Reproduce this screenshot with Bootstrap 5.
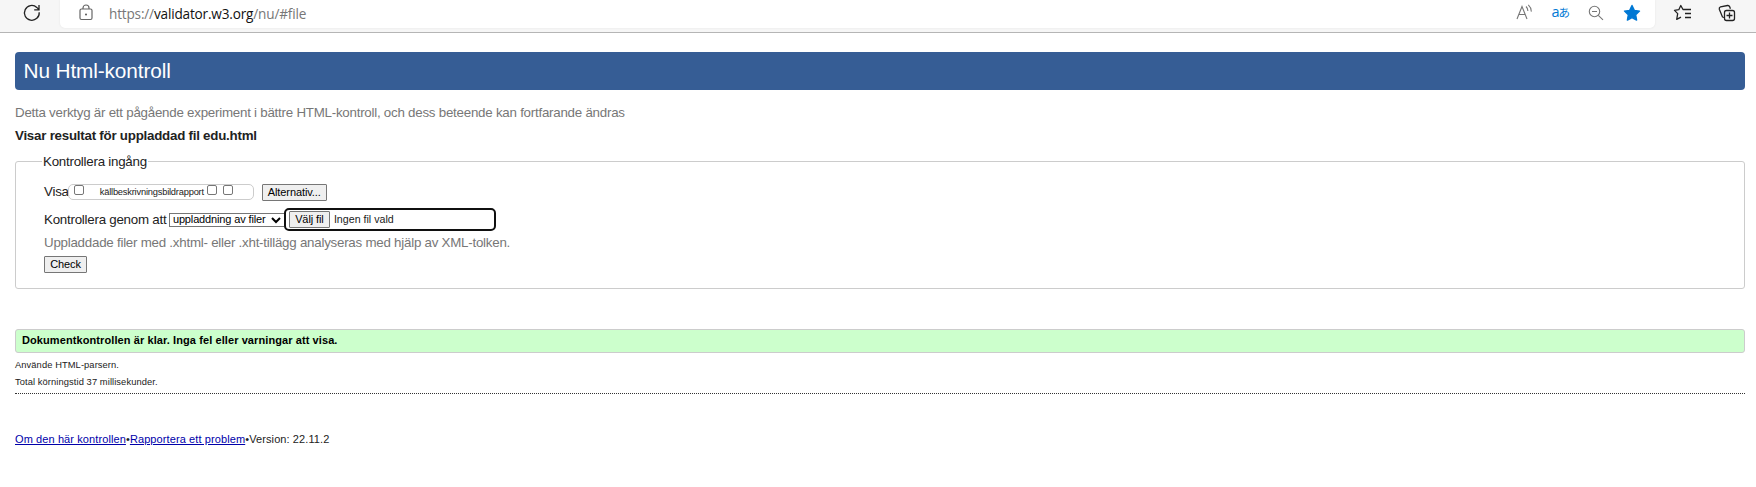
<!DOCTYPE html>
<html lang="sv">
<head>
<meta charset="utf-8">
<title>Nu Html-kontroll</title>
<link href="https://cdn.jsdelivr.net/npm/bootstrap@5.3.0/dist/css/bootstrap.min.css" rel="stylesheet">
<style>
body{font-family:"Liberation Sans",Arial,sans-serif;font-size:13.33px;line-height:20px;letter-spacing:-.24px;color:#222;background:#fff;overflow:hidden}
.browser{height:33px;background:#f6f6f6;border-bottom:1px solid #b5b5b5}
.browser svg{display:block;flex:none;letter-spacing:0}
.reload{width:60px;padding-left:22px;padding-top:3px}
.address{height:28px;width:1595px;background:#fff;border-radius:0 0 5px 5px;padding:0 7px 0 17px;box-shadow:0 0 2px #e2e2e2}
.url{font-family:"Open Sans","Noto Sans",sans-serif;font-size:13.6px;letter-spacing:-.18px;color:#777;margin-left:14px;line-height:27px;white-space:nowrap}
.url b{font-weight:400;color:#111}
.page-body{padding:19px 11px 0 15px}
.banner{height:38px;line-height:38px;background:#365d95;color:#fff;font-size:20.8px;letter-spacing:-.12px;font-weight:400;border-radius:4px;padding-left:8.5px;margin:0 0 13px}
.grey{color:#777}
.line{height:20px;margin:0;white-space:nowrap}
.checker{height:139px;margin:4px 0 0;border:1px solid #ccc;border-radius:3px;padding:0 0 0 28px;min-inline-size:0}
.checker legend{font-size:13.33px;line-height:23px;height:22px;padding:0 1px;margin:0 0 0 -2px}
.pill{width:186px;height:16px;border:1px solid #ccc;border-radius:5px;font-size:9.3px;line-height:15px;letter-spacing:-.2px;margin-left:-1px}
.tick{appearance:none;width:10px;height:10px;border:1px solid #767676;border-radius:2px;background:#fff;margin:0;flex:none}
.push{appearance:none;background:#efefef;border:1px solid #767676;border-radius:1px;height:17px;line-height:15px;font-size:11px;letter-spacing:-.1px;color:#000;padding:0;text-align:center;white-space:nowrap;flex:none}
.method{width:115px;height:14px;border:1px solid #767676;border-right:0;font-size:11px;line-height:13px;letter-spacing:-.14px;color:#000;padding-left:3px}
.upload{width:212px;height:23px;border:2px solid #101010;border-radius:5px;padding-left:3px;font-size:10.67px;letter-spacing:0}
.upload span{line-height:16px;margin-bottom:2px}
.success{height:24px;line-height:21px;margin-top:40px;background:#cfc;border:1px solid #ccc;border-radius:3px;font-size:11px;letter-spacing:.09px;font-weight:700;color:#000;padding-left:6px}
.tiny{font-size:9.33px;height:17px;line-height:17px;letter-spacing:.09px;margin:0}
.rule-dots{border-bottom:1px dotted #333;margin-top:2px}
.foot{font-size:11px;line-height:16px;letter-spacing:.1px;margin-top:37px}
.foot a{color:#00a}
</style>
</head>
<body>
<header class="browser d-flex">
  <div class="reload"><svg width="20" height="20" viewBox="0 0 20 20" fill="none" stroke="#222" stroke-width="1.3"><path d="M17.2 9.2A7.4 7.4 0 1 1 14.8 4.400L17 6.600M17 2v4.800h-4.800"/></svg></div>
  <div class="address d-flex align-items-start">
    <svg width="18" height="26" viewBox="0 0 18 26" fill="none" stroke="#666" stroke-width="1.2"><rect x="3" y="9" width="12" height="10.500" rx="1.500"/><path d="M6 9V8a3 3 0 0 1 6 0V9"/><circle cx="9" cy="14.500" r="1" fill="#555" stroke="none"/></svg>
    <span class="url">https://<b>validator.w3.org</b>/nu/#file</span>
    <div class="ms-auto d-flex">
      <svg width="144" height="28" viewBox="1504 0 144 28" fill="none">
        <g stroke="#777" stroke-width="1.1"><path d="M1517 19l5-12.500 5 12.500M1518.700 14.500h6.600M1526 6.500q2 2 1.800 4.500M1528.300 4.800q3.200 3 2.900 6.800"/></g>
        <g stroke="#777" stroke-width="1.1"><circle cx="1594.500" cy="11.500" r="5.200"/><path d="M1598.300 15.300l4.700 4.500M1592 11.500h5"/></g>
        <path fill="#0078d4" stroke="#0078d4" stroke-linejoin="round" stroke-width="1.400" d="M1632 5.500l2.300 4.900 5.200.7-3.800 3.700.9 5.300-4.600-2.500-4.600 2.500.9-5.300-3.800-3.700 5.200-.7z"/>
        <text x="1551.500" y="17" font-family="Open Sans" font-size="14.500" fill="#0078d4">a</text>
        <text x="1558.500" y="17" font-family="Noto Sans CJK JP" font-size="11.500" font-weight="400" fill="#0078d4">あ</text>
      </svg>
    </div>
  </div>
  <svg width="90" height="28" viewBox="1655 0 90 28" fill="none" stroke="#222" stroke-width="1.3" stroke-linejoin="round">
    <path d="M1685.500 9.500h-2.500l-2.200-4-2 4.200-4.300.7 3.200 3.200-1 5.800 4.300-2.200M1684.500 9.500h6.500M1685 13.500h6M1685 17.500h6"/>
    <path d="M1724 17.500l-1.500-.5-3.200-7.800q-.4-1.700 1.200-2.300l7-1.400q1.600-.2 2.200 1.200l.7 2"/><rect x="1724.500" y="10.500" width="10" height="10" rx="2"/><path d="M1729.500 12.500v6M1726.500 15.500h6"/>
  </svg>
</header>
<main class="page-body">
  <h1 class="banner"><span>Nu Html-kontroll</span></h1>
  <p class="line grey"><span>Detta verktyg är ett pågående experiment i bättre HTML-kontroll, och dess beteende kan fortfarande ändras</span></p>
  <p class="line fw-bold" style="margin-top:3px"><span>Visar resultat för uppladdad fil edu.html</span></p>
  <fieldset class="checker">
    <legend class="float-none w-auto"><span>Kontrollera ingång</span></legend>
    <div class="d-flex align-items-center" style="margin-top:10px">
      <span>Visa</span>
      <div class="pill d-flex"><input class="tick" style="margin-left:5px" type="checkbox"><span style="margin-left:16px">källbeskrivningsbildrapport</span><input class="tick" style="margin-left:3px" type="checkbox"><input class="tick" style="margin-left:6px" type="checkbox"></div>
      <button class="push" style="width:65px;margin-left:8px">Alternativ...</button>
    </div>
    <div class="d-flex align-items-center" style="height:23px;margin-top:6px">
      <span style="margin-right:2.500px">Kontrollera genom att</span>
      <div class="method d-flex align-items-center"><span>uppladdning av filer</span><svg style="margin-left:5px" width="10" height="8" viewBox="0 0 10 8" fill="none" stroke="#000" stroke-width="2"><path d="M1 2l4 4 4-4"/></svg></div>
      <div class="upload d-flex align-items-center"><button class="push" style="width:41px">Välj fil</button><span class="ms-1">Ingen fil vald</span></div>
    </div>
    <p class="line grey" style="margin-top:2px"><span>Uppladdade filer med .xhtml- eller .xht-tillägg analyseras med hjälp av XML-tolken.</span></p>
    <button class="push d-block" style="width:43px;margin-top:3px">Check</button>
  </fieldset>
  <div class="success"><span>Dokumentkontrollen är klar. Inga fel eller varningar att visa.</span></div>
  <p class="tiny" style="margin-top:4px"><span>Använde HTML-parsern.</span></p>
  <p class="tiny"><span>Total körningstid 37 millisekunder.</span></p>
  <div class="rule-dots"></div>
  <footer class="foot"><a href="#">Om den här kontrollen</a><span>•</span><a href="#">Rapportera ett problem</a><span>•</span><span>Version: 22.11.2</span></footer>
</main>
<script src="https://cdn.jsdelivr.net/npm/bootstrap@5.3.0/dist/js/bootstrap.bundle.min.js"></script>
</body>
</html>
